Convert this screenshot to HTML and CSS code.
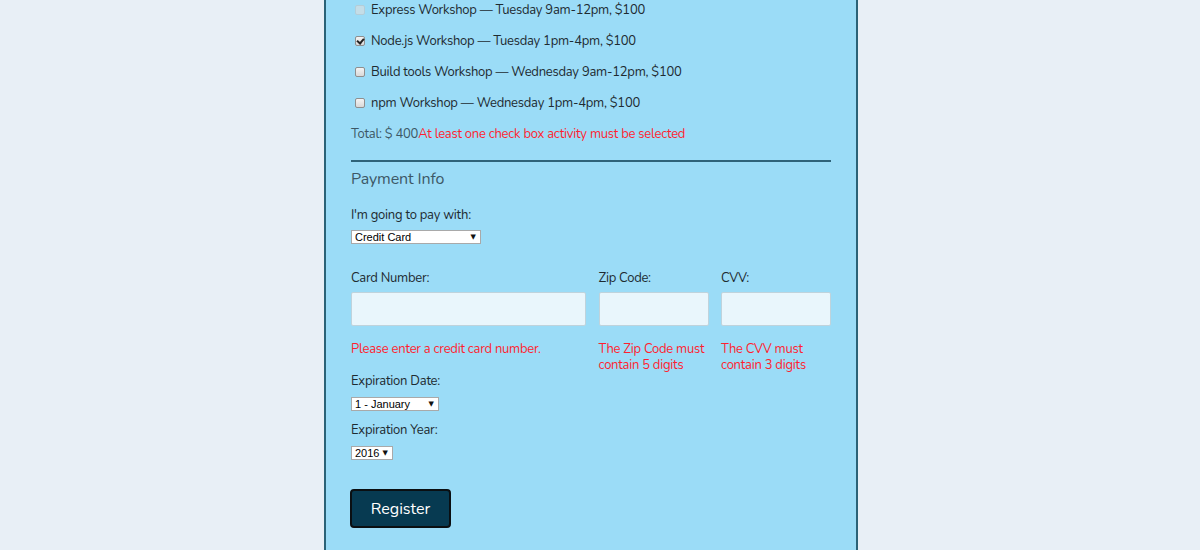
FILE: index.html
```html
<!DOCTYPE html>
<html lang="en">
<head>
<meta charset="utf-8">
<title>Register</title>
<link rel="stylesheet" href="styles.css">
</head>
<body>
<div class="container">
  <form class="form">
    <div class="activities">
      <label class="activity disabled"><span class="check"></span>Express Workshop — Tuesday 9am-12pm, $100</label>
      <label class="activity"><span class="check checked"></span>Node.js Workshop — Tuesday 1pm-4pm, $100</label>
      <label class="activity"><span class="check"></span>Build tools Workshop — Wednesday 9am-12pm, $100</label>
      <label class="activity"><span class="check"></span>npm Workshop — Wednesday 1pm-4pm, $100</label>
      <p class="total">Total: $ 400<span class="error">At least one check box activity must be selected</span></p>
    </div>
    <hr class="rule">
    <h2 class="legend">Payment Info</h2>
    <p class="label pay-label">I'm going to pay with:</p>
    <div class="select-wrap w-pay"><select class="select"><option>Credit Card</option></select></div>
    <div class="card-row">
      <div class="col col-card">
        <p class="label">Card Number:</p>
        <input class="input" type="text">
        <p class="error msg">Please enter a credit card number.</p>
        <p class="label exp-label">Expiration Date:</p>
        <div class="select-wrap w-month"><select class="select"><option>1 - January</option></select></div>
        <p class="label exp-label2">Expiration Year:</p>
        <div class="select-wrap w-year"><select class="select"><option>2016</option></select></div>
      </div>
      <div class="col col-small">
        <p class="label">Zip Code:</p>
        <input class="input" type="text">
        <p class="error msg">The Zip Code must contain 5 digits</p>
      </div>
      <div class="col col-small">
        <p class="label">CVV:</p>
        <input class="input" type="text">
        <p class="error msg">The CVV must contain 3 digits</p>
      </div>
    </div>
    <button class="register" type="button">Register</button>
  </form>
</div>
</body>
</html>
```

FILE: styles.css
```css
html, body {
  margin: 0;
  padding: 0;
  height: 100%;
}
body {
  background: #e8eff6;
  font-family: "Nunito", Lato, "Noto Sans", sans-serif;
  color: #1e2b31;
  font-size: 13px;
  letter-spacing: -0.25px;
}
.container {
  width: 530px;
  margin: 0 auto;
  min-height: 100%;
  background: #9bdcf7;
  border-left: 2px solid #2b6277;
  border-right: 2px solid #2b6277;
  box-sizing: content-box;
  transform: translateX(-9px);
}
.form {
  padding: 0 25px 30px 25px;
}
p { margin: 0; }
.activity {
  display: flex;
  align-items: center;
  height: 20px;
  margin-bottom: 11px;
  line-height: 20px;
}
.check {
  width: 10px;
  height: 10px;
  box-sizing: border-box;
  border: 1px solid #8f8f8f;
  border-radius: 2px;
  background: linear-gradient(#f4f4f4, #d9d9d9);
  margin: 0 6px 0 4px;
  position: relative;
}
.check.checked::after {
  content: "";
  position: absolute;
  left: 2px;
  top: 0px;
  width: 3px;
  height: 5px;
  border-right: 2px solid #222;
  border-bottom: 2px solid #222;
  transform: rotate(40deg);
}
.activity.disabled .check {
  border-color: #b3cdd8;
  background: #c4dde7;
}
.total {
  line-height: 20px;
  color: #3d5866;
}
.error {
  color: #ff1f30;
  font-size: 13px;
}
.rule {
  border: 0;
  height: 2px;
  background: #2f6379;
  margin: 16px 0 0 0;
}
.legend {
  margin: 6px 0 0 0;
  font-size: 16px;
  line-height: 22px;
  font-weight: normal;
  color: #3d5866;
  letter-spacing: -0.1px;
}
.label {
  line-height: 20px;
}
.pay-label {
  margin-top: 15px;
}
.select-wrap {
  position: relative;
  margin-top: 5px;
}
.select-wrap::after {
  content: "▼";
  position: absolute;
  right: 5px;
  top: 3px;
  font-size: 7px;
  line-height: 9px;
  color: #111;
  pointer-events: none;
  font-family: "DejaVu Sans", sans-serif;
  letter-spacing: 0;
}
.select {
  -webkit-appearance: none;
  appearance: none;
  display: block;
  width: 100%;
  height: 14px;
  box-sizing: border-box;
  border: 1px solid #a9a9a9;
  background: #fff;
  font-family: "Liberation Sans", Arial, sans-serif;
  font-size: 11px;
  line-height: 12px;
  letter-spacing: 0;
  padding: 0 0 0 3px;
  color: #000;
  border-radius: 0;
  outline: none;
}
.w-pay { width: 130px; }
.w-month { width: 88px; margin-top: 6px; }
.w-year { width: 42px; margin-top: 6px; }
.card-row {
  display: grid;
  grid-template-columns: 235px 110px 110px;
  justify-content: space-between;
  margin-top: 24px;
  align-items: start;
}
.col .input {
  display: block;
  width: 100%;
  height: 34px;
  box-sizing: border-box;
  margin-top: 4px;
  background: #e9f6fc;
  border: 1px solid #bfd3dc;
  border-radius: 2px;
  outline: none;
}
.msg {
  margin-top: 15px;
  line-height: 16px;
}
.exp-label {
  margin-top: 14px;
}
.exp-label2 {
  margin-top: 9px;
}
.register {
  display: block;
  margin-top: 29px;
  margin-left: -1px;
  width: 101px;
  height: 39px;
  background: #073a51;
  border: 2px solid #0a0f12;
  border-radius: 4px;
  color: #fff;
  font-family: "Nunito", Lato, "Noto Sans", sans-serif;
  font-size: 16px;
  letter-spacing: 0;
  padding: 0;
}
```
